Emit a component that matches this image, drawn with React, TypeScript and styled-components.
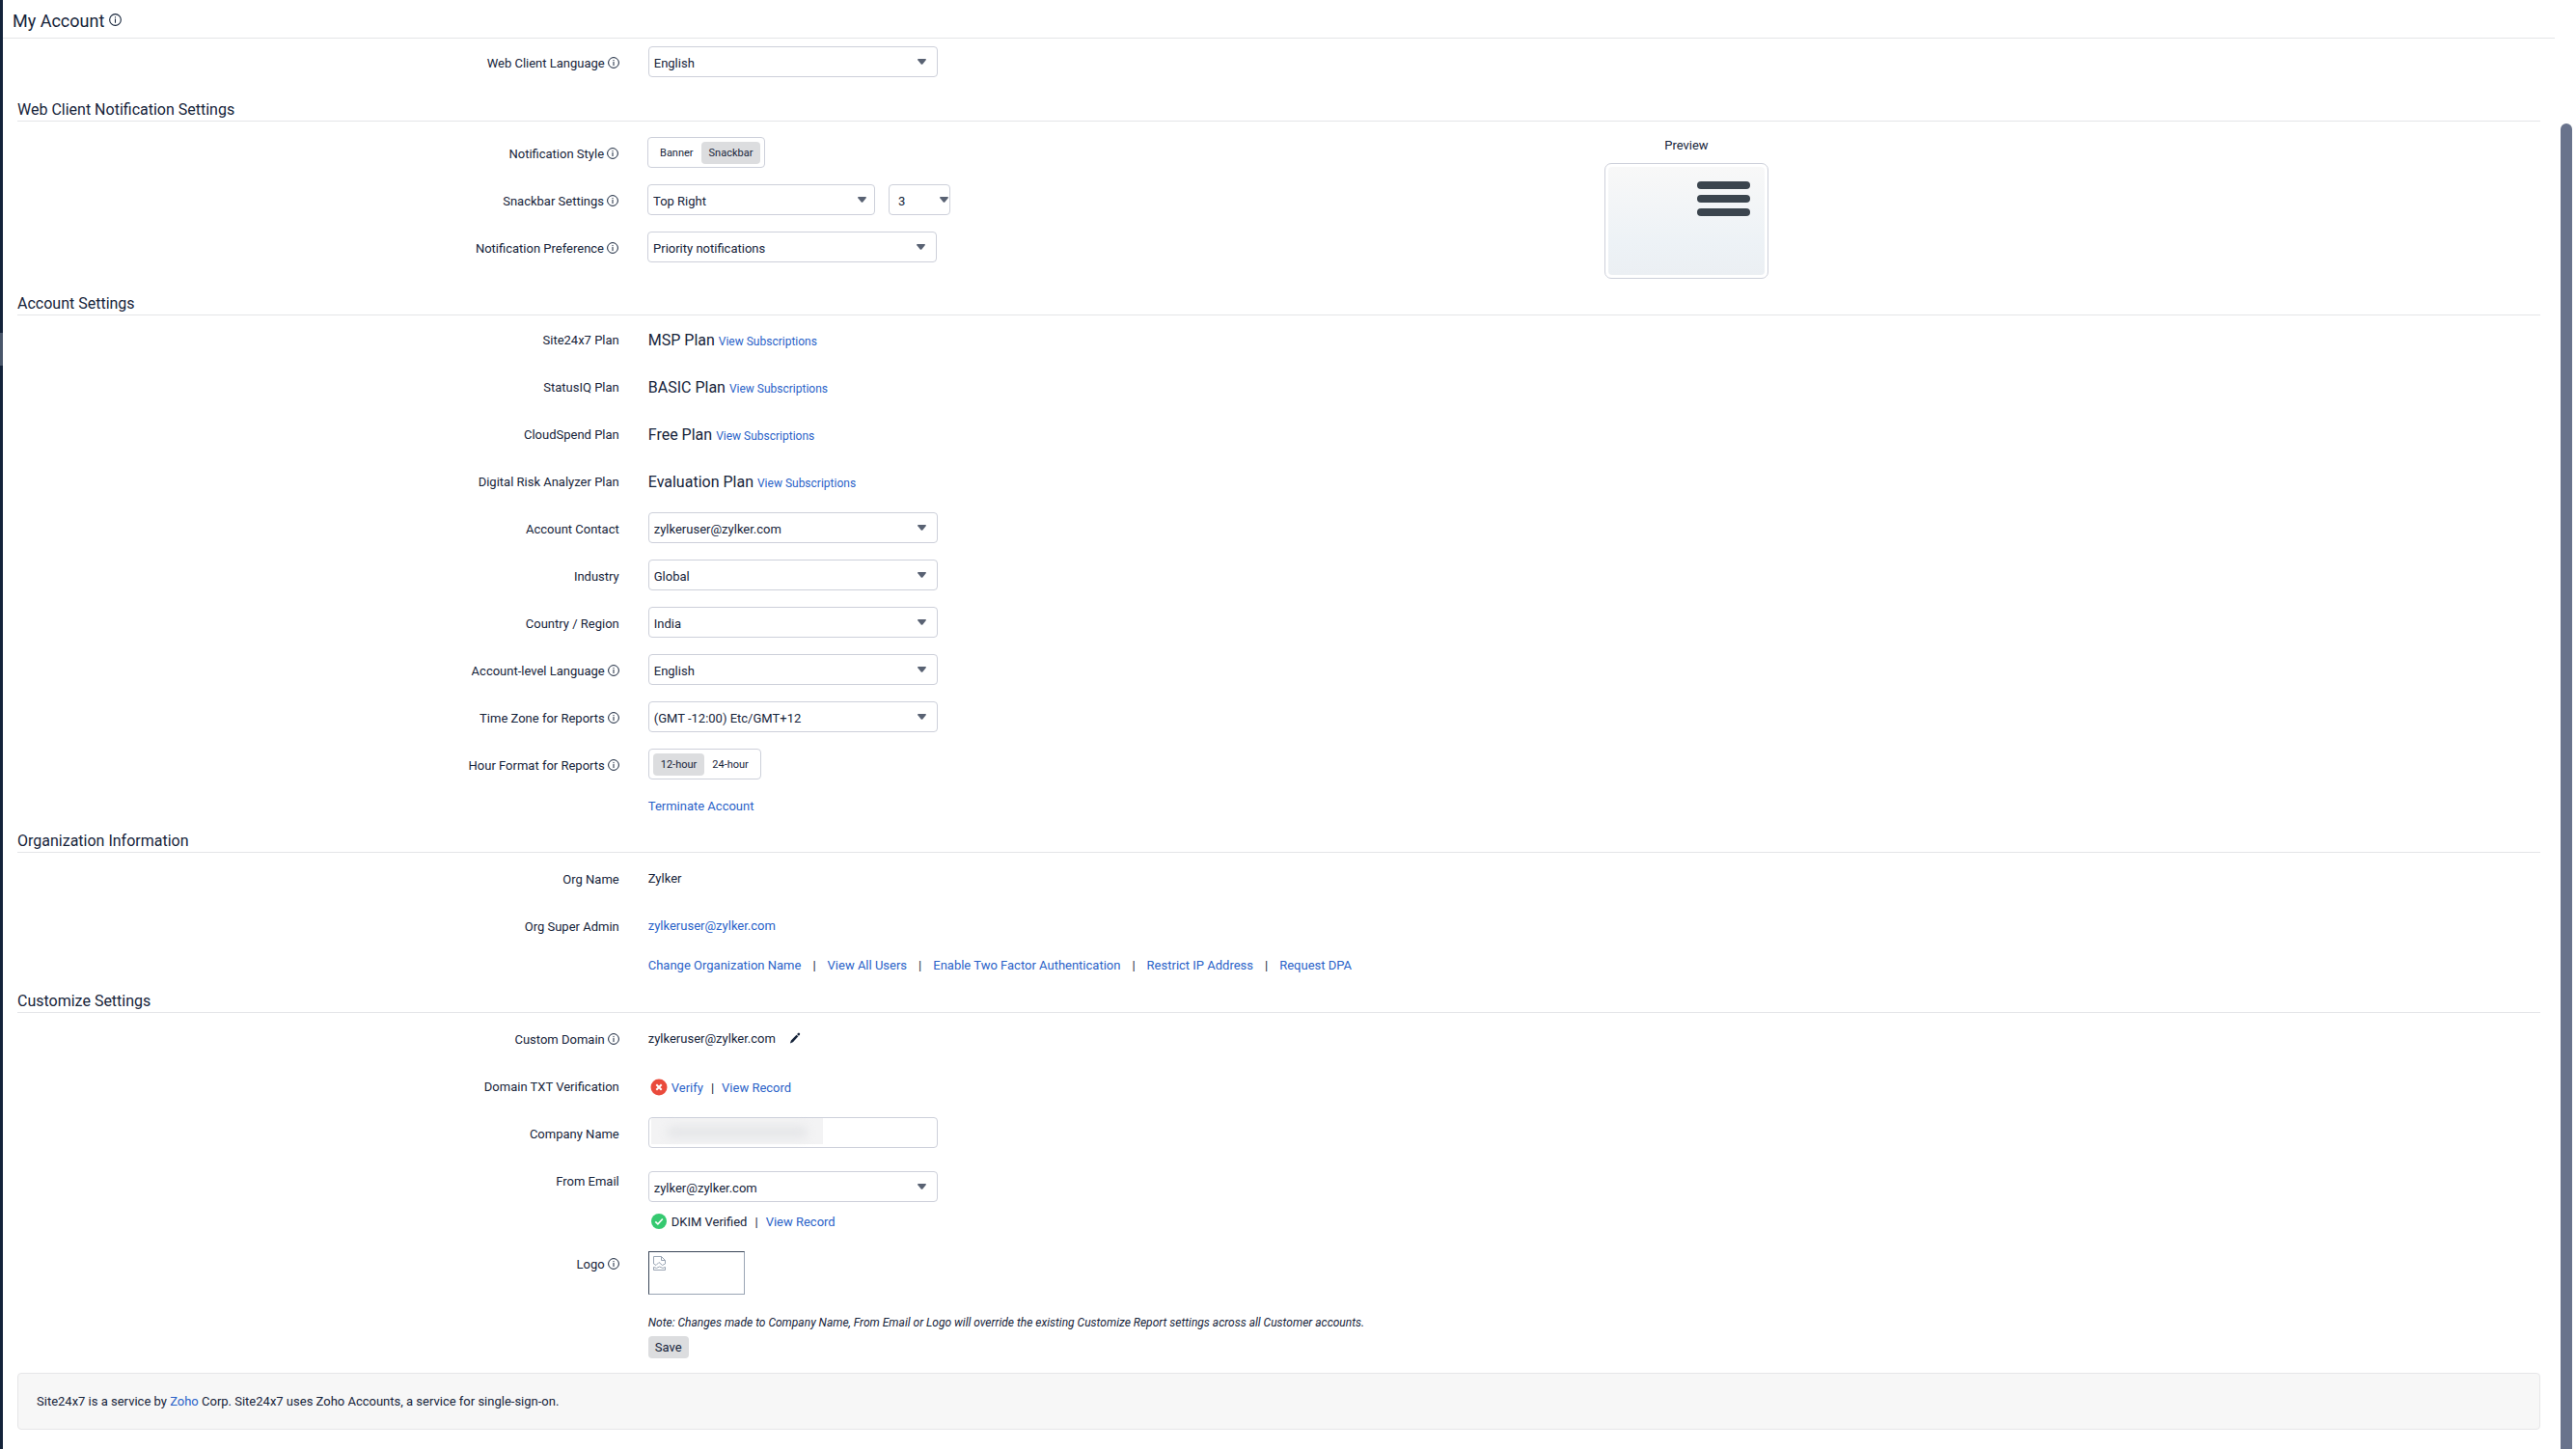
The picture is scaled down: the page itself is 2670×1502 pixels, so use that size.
import React, { useId } from "react";
import type { ReactNode } from "react";
import styled, { createGlobalStyle } from "styled-components";

const ink = "#16243a";
const linkBlue = "#2a62c8";
const border = "#cdd0da";
const rule = "#e4e5e8";

const GlobalStyle = createGlobalStyle`
  * { box-sizing: border-box; }
  body { margin: 0; background: #fff; }
  body, button, input, select {
    font-family: Roboto, "Liberation Sans", sans-serif;
    font-size: 13px;
    color: ${ink};
  }
`;

const Page = styled.div`
  display: flex;
  min-height: 100vh;
`;

const NavEdge = styled.div`
  width: 3px;
  flex: none;
  padding-top: 345px;
  background: #13233a;
`;

const NavHandle = styled.div`
  height: 34px;
  background: #49566a;
`;

const Main = styled.main`
  flex: 1;
  min-width: 0;
`;

const ScrollTrack = styled.div`
  display: flex;
  flex: none;
  width: 22px;
  padding: 128px 4px 0 6px;
`;

const ScrollThumb = styled.div`
  flex: 1;
  border-radius: 6px 6px 0 0;
  background: #69738c;
`;

const PageHeader = styled.header`
  display: flex;
  align-items: center;
  gap: 5px;
  height: 40px;
  padding: 4px 10px 0;
  border-bottom: 1px solid ${rule};
`;

const PageTitle = styled.h1`
  margin: 0;
  font-size: 18px;
  font-weight: 400;
  line-height: 24px;
`;

const Content = styled.form`
  display: flex;
  flex-direction: column;
  padding: 8px 15px 20px;
`;

const Section = styled.section<{ $before: number }>`
  display: flex;
  flex-direction: column;
  margin-top: ${(p) => p.$before}px;
`;

const SectionTitle = styled.h2<{ $after: number }>`
  margin: 0 0 ${(p) => p.$after}px;
  border-bottom: 1px solid ${rule};
  font-size: 16px;
  font-weight: 400;
  line-height: 22px;
`;

const Rows = styled.div`
  display: flex;
  flex-direction: column;
  gap: 17px;
`;

const Split = styled.div`
  display: grid;
  grid-template-columns: 63% auto 1fr;
  margin-right: 4px;
`;

const Row = styled.div<{ $label: string; $before: number }>`
  display: grid;
  grid-template-columns: ${(p) => p.$label} 1fr;
  align-items: start;
  margin-top: ${(p) => p.$before}px;
`;

const LabelCell = styled.div`
  display: flex;
  justify-content: flex-end;
  align-items: center;
  gap: 3px;
  height: 32px;
  padding: 3px 30px 0 0;
  white-space: nowrap;
`;

const Value = styled.div<{ $top?: number; $height?: number }>`
  display: flex;
  align-items: center;
  min-height: ${(p) => p.$height ?? 32}px;
  margin-top: ${(p) => p.$top ?? 0}px;
  white-space: nowrap;
`;

const PlanValue = styled(Value)`
  align-items: baseline;
  gap: 4px;
  height: 32px;
  padding-top: 2px;
  line-height: 32px;
`;

const PlanName = styled.span`
  font-size: 16px;
`;

const Link = styled.a`
  color: ${linkBlue};
  text-decoration: none;
`;

const SmallLink = styled(Link)`
  font-size: 12px;
`;

const Divider = styled.span<{ $space: number }>`
  margin: 0 ${(p) => p.$space}px;
`;

const SelectBox = styled.span<{ $width: number }>`
  position: relative;
  display: block;
  width: ${(p) => p.$width}px;
  height: 32px;
`;

const SelectField = styled.select<{ $inset: number }>`
  appearance: none;
  display: block;
  width: 100%;
  height: 32px;
  margin: 0;
  padding: 2px 16px 0 ${(p) => p.$inset}px;
  border: 1px solid ${border};
  border-radius: 4px;
  background: #fff;
`;

const Caret = styled.svg<{ $right: number }>`
  position: absolute;
  top: 13px;
  right: ${(p) => p.$right}px;
  width: 9px;
  height: 6px;
  pointer-events: none;
`;

const TextField = styled.input`
  display: block;
  width: 300px;
  height: 32px;
  padding: 0 5px;
  border: 1px solid ${border};
  border-radius: 4px;
  background: #fff;
`;

const FieldBox = styled.span`
  position: relative;
  display: block;
`;

const Redaction = styled.span`
  position: absolute;
  top: 1px;
  left: 3px;
  width: 178px;
  height: 27px;
  background: #f3f3f4;

  &::after {
    content: "";
    position: absolute;
    inset: 8px 16px 6px;
    border-radius: 6px;
    background: #e6e7e9;
    filter: blur(5px);
  }
`;

const Toggle = styled.div`
  display: flex;
  align-items: center;
  height: 32px;
  padding: 0 4px;
  border: 1px solid ${border};
  border-radius: 4px;
`;

const ToggleOption = styled.button<{ $active?: boolean }>`
  height: 23px;
  padding: 0 8px;
  border: 0;
  border-radius: 4px;
  background: ${(p) => (p.$active ? "#dcdddf" : "transparent")};
  font-size: 11px;
`;

const SelectGroup = styled.div`
  display: flex;
  gap: 14px;
`;

const Preview = styled.figure`
  display: flex;
  flex-direction: column;
  align-items: center;
  gap: 9px;
  margin: 0;
`;

const PreviewCaption = styled.figcaption`
  line-height: 18px;
`;

const PreviewFrame = styled.div`
  width: 170px;
  height: 120px;
  padding: 3px;
  border: 1px solid ${border};
  border-radius: 7px;
`;

const PreviewScreen = styled.div`
  display: flex;
  flex-direction: column;
  align-items: flex-end;
  gap: 6px;
  height: 112px;
  padding: 15px 15px 0 0;
  border-radius: 4px;
  background: linear-gradient(#f8f8f8, #edf2f6 70%, #ebeff3);
`;

const PreviewBar = styled.div`
  width: 55px;
  height: 8px;
  border-radius: 4px;
  background: #3b454e;
`;

const InfoIcon = styled.svg<{ $size: number }>`
  flex: none;
  width: ${(p) => p.$size}px;
  height: ${(p) => p.$size}px;
  margin-bottom: 2px;
`;

const StatusIcon = styled.svg`
  width: 18px;
  height: 18px;
  margin: 0 4px 0 2px;
`;

const EditButton = styled.button`
  display: flex;
  margin: 0 0 0 14px;
  padding: 0;
  border: 0;
  background: none;
`;

const LogoFrame = styled.div`
  width: 100px;
  height: 45px;
  padding: 4px 4px;
  border: 1px solid #9aa5b4;
  border-top-color: #3a4658;
  border-left-color: #3a4658;
`;

const Note = styled.p`
  margin: 0;
  font-size: 12px;
  font-style: italic;
  white-space: nowrap;
`;

const SaveButton = styled.button`
  height: 23px;
  padding: 0 7px;
  border: 0;
  border-radius: 4px;
  background: #dcdddf;
`;

const Footer = styled.footer`
  margin-top: 15px;
  padding: 0 19px;
  border: 1px solid #e6e6e8;
  border-radius: 4px;
  background: #f7f7f7;
  line-height: 57px;
`;

function Info({ size = 12 }: { size?: number }) {
  return (
    <InfoIcon $size={size} viewBox="0 0 12 12" fill="none" stroke={ink} aria-hidden="true">
      <circle cx="6" cy="6" r="5.4" />
      <path d="M6 5v4M6 3v1.200" />
    </InfoIcon>
  );
}

type FieldProps = {
  label?: string;
  info?: boolean;
  htmlFor?: string;
  labelWidth?: string;
  before?: number;
  children: ReactNode;
};

function Field({ label, info, htmlFor, labelWidth = "25%", before = 0, children }: FieldProps) {
  return (
    <Row $label={labelWidth} $before={before}>
      {label ? (
        <LabelCell>
          {htmlFor ? <label htmlFor={htmlFor}>{label}</label> : <span>{label}</span>}
          {info && <Info />}
        </LabelCell>
      ) : (
        <span />
      )}
      {children}
    </Row>
  );
}

type DropdownProps = { id?: string; value: string; width?: number; inset?: number; caretRight?: number; name?: string };

function Dropdown({ id, value, width = 300, inset = 5, caretRight = 12, name }: DropdownProps) {
  return (
    <SelectBox $width={width}>
      <SelectField id={id} aria-label={name} $inset={inset} defaultValue={value}>
        <option>{value}</option>
      </SelectField>
      <Caret $right={caretRight} viewBox="0 0 9 6" aria-hidden="true">
        <path d="M.6 0h7.8q.8.4.3 1.200L5.300 5.400q-.8.8-1.600 0L.300 1.200Q-.2.400.6 0z" fill="#596273" />
      </Caret>
    </SelectBox>
  );
}

type SelectRowProps = { label: string; value: string; info?: boolean; labelWidth?: string; top?: number };

function SelectRow({ label, value, info, labelWidth, top }: SelectRowProps) {
  const id = useId();
  return (
    <Field label={label} info={info} htmlFor={id} labelWidth={labelWidth}>
      <Value $top={top}>
        <Dropdown id={id} value={value} />
      </Value>
    </Field>
  );
}

function PlanRow({ label, plan }: { label: string; plan: string }) {
  return (
    <Field label={label}>
      <PlanValue>
        <PlanName>{plan}</PlanName>
        <SmallLink href="#subscriptions">View Subscriptions</SmallLink>
      </PlanValue>
    </Field>
  );
}

const splitLabel = "39.7%";

const orgLinks = [
  "Change Organization Name",
  "View All Users",
  "Enable Two Factor Authentication",
  "Restrict IP Address",
  "Request DPA",
];

export default function App() {
  return (
    <Page>
      <GlobalStyle />
      <NavEdge>
        <NavHandle />
      </NavEdge>
      <Main>
        <PageHeader>
          <PageTitle>My Account</PageTitle>
          <Info size={13} />
        </PageHeader>
        <Content onSubmit={(e) => e.preventDefault()}>
          <SelectRow label="Web Client Language" value="English" info />

          <Section $before={23}>
            <SectionTitle $after={16}>Web Client Notification Settings</SectionTitle>
            <Split>
              <Rows>
                <Field label="Notification Style" info labelWidth={splitLabel}>
                  <Value>
                    <Toggle>
                      <ToggleOption type="button">Banner</ToggleOption>
                      <ToggleOption type="button" $active>Snackbar</ToggleOption>
                    </Toggle>
                  </Value>
                </Field>
                <Field label="Snackbar Settings" info htmlFor="snackbar-position" labelWidth={splitLabel}>
                  <SelectGroup>
                    <Dropdown id="snackbar-position" value="Top Right" width={236} caretRight={9} />
                    <Dropdown name="Snackbar count" value="3" width={64} inset={9} caretRight={2} />
                  </SelectGroup>
                </Field>
                <SelectRow label="Notification Preference" value="Priority notifications" info labelWidth={splitLabel} />
              </Rows>
              <Preview>
                <PreviewCaption>Preview</PreviewCaption>
                <PreviewFrame>
                  <PreviewScreen>
                    <PreviewBar />
                    <PreviewBar />
                    <PreviewBar />
                  </PreviewScreen>
                </PreviewFrame>
              </Preview>
            </Split>
          </Section>

          <Section $before={15}>
            <SectionTitle $after={8}>Account Settings</SectionTitle>
            <Rows>
              <PlanRow label="Site24x7 Plan" plan="MSP Plan" />
              <PlanRow label="StatusIQ Plan" plan="BASIC Plan" />
              <PlanRow label="CloudSpend Plan" plan="Free Plan" />
              <PlanRow label="Digital Risk Analyzer Plan" plan="Evaluation Plan" />
              <SelectRow label="Account Contact" value="zylkeruser@zylker.com" />
              <SelectRow label="Industry" value="Global" />
              <SelectRow label="Country / Region" value="India" />
              <SelectRow label="Account-level Language" value="English" info />
              <SelectRow label="Time Zone for Reports" value="(GMT -12:00) Etc/GMT+12" info />
              <Field label="Hour Format for Reports" info>
                <Value>
                  <Toggle>
                    <ToggleOption type="button" $active>12-hour</ToggleOption>
                    <ToggleOption type="button">24-hour</ToggleOption>
                  </Toggle>
                </Value>
              </Field>
            </Rows>
            <Field before={15}>
              <Value $height={24}>
                <Link href="#terminate">Terminate Account</Link>
              </Value>
            </Field>
          </Section>

          <Section $before={14}>
            <SectionTitle $after={10}>Organization Information</SectionTitle>
            <Rows>
              <Field label="Org Name">
                <Value>Zylker</Value>
              </Field>
              <Field label="Org Super Admin">
                <Value>
                  <Link href="mailto:zylkeruser@zylker.com">zylkeruser@zylker.com</Link>
                </Value>
              </Field>
            </Rows>
            <Field before={13}>
              <Value $height={24}>
                {orgLinks.map((text, i) => (
                  <React.Fragment key={text}>
                    {i > 0 && <Divider $space={12}>|</Divider>}
                    <Link href="#organization">{text}</Link>
                  </React.Fragment>
                ))}
              </Value>
            </Field>
          </Section>

          <Section $before={15}>
            <SectionTitle $after={10}>Customize Settings</SectionTitle>
            <Rows>
              <Field label="Custom Domain" info>
                <Value>
                  zylkeruser@zylker.com
                  <EditButton type="button" aria-label="Edit custom domain">
                    <svg width="12" height="12" viewBox="0 0 12 12" fill={ink}>
                      <path d="M9.200.9q.6-.6 1.200-.1l.5.4q.6.600.1 1.200L9.900 3.700 8 2.100zM7.500 2.700l1.900 1.600-5.500 5.900L.9 11.600l1-3z" />
                    </svg>
                  </EditButton>
                </Value>
              </Field>
              <Field label="Domain TXT Verification">
                <Value $top={4} $height={28}>
                  <StatusIcon viewBox="0 0 18 18" aria-hidden="true">
                    <circle cx="9" cy="9" r="8.500" fill="#ea4b3c" />
                    <path d="M6.300 6.300l5.400 5.400M11.700 6.300l-5.400 5.400" stroke="#fff" strokeWidth="2" />
                  </StatusIcon>
                  <Link href="#verify">Verify</Link>
                  <Divider $space={8}>|</Divider>
                  <Link href="#record">View Record</Link>
                </Value>
              </Field>
              <Field label="Company Name" htmlFor="company-name">
                <FieldBox>
                  <TextField id="company-name" type="text" />
                  <Redaction />
                </FieldBox>
              </Field>
              <SelectRow label="From Email" value="zylker@zylker.com" top={7} />
            </Rows>
            <Field before={8}>
              <Value $height={24}>
                <StatusIcon viewBox="0 0 18 18" aria-hidden="true">
                  <circle cx="9" cy="9" r="8" fill="#35c970" />
                  <path d="M5.300 9.300l2.600 2.500 4.900-5.300" fill="none" stroke="#fff" strokeWidth="1.600" />
                </StatusIcon>
                DKIM Verified
                <Divider $space={8}>|</Divider>
                <Link href="#record">View Record</Link>
              </Value>
            </Field>
            <Field label="Logo" info before={15}>
              <Value $top={4}>
                <LogoFrame>
                  <svg width="13" height="15" viewBox="0 0 13 15" fill="none" stroke="#9aa5b4" aria-label="Logo not available">
                    <path d="M.5 8V.5h8l4 4V8M8.500.5v4h4M.5 8l2.500 1.500L6 6.500l3.500 3 3-1.500M.5 11.500v3h12v-3l-2.500 1-3.500-1.500-3 1.500z" />
                  </svg>
                </LogoFrame>
              </Value>
            </Field>
            <Field before={17}>
              <Value $height={24}>
                <Note>
                  Note: Changes made to Company Name, From Email or Logo will override the existing Customize Report
                  settings across all Customer accounts.
                </Note>
              </Value>
            </Field>
            <Field before={2}>
              <Value $height={23}>
                <SaveButton type="submit">Save</SaveButton>
              </Value>
            </Field>
          </Section>

          <Footer>
            Site24x7 is a service by <Link href="#zoho">Zoho</Link> Corp. Site24x7 uses Zoho Accounts, a service for
            single-sign-on.
          </Footer>
        </Content>
      </Main>
      <ScrollTrack aria-hidden="true">
        <ScrollThumb />
      </ScrollTrack>
    </Page>
  );
}
